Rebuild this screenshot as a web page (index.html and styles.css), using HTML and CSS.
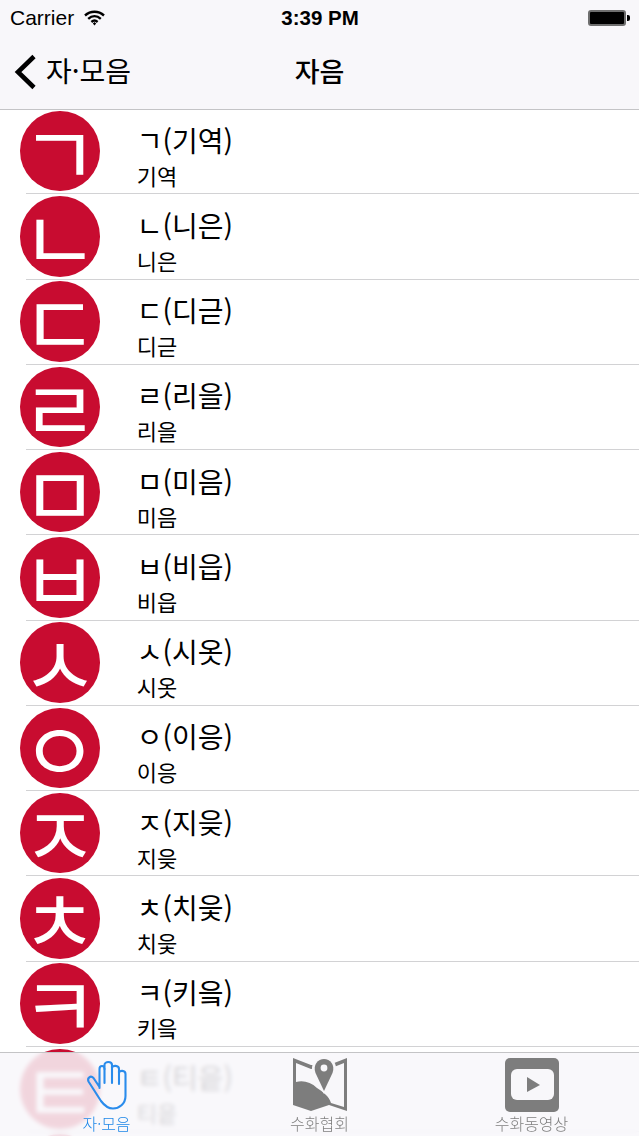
FILE: index.html
```html
<!DOCTYPE html>
<html lang="ko">

<head>
	<meta charset="UTF-8">
	<meta name="viewport" content="width=device-width, initial-scale=1.0">
	<title>자음</title>
	<link rel="stylesheet" href="styles.css">
</head>

<body>
	<div class="screen">
		<header class="top-bar">
			<div class="status-bar">
				<div class="status-left">
					<span>Carrier</span>
					<svg class="wifi" viewBox="0 0 21 16" width="21" height="16">
						<path d="M1 5.5C6.5 .5 14.5 .5 20 5.5" />
						<path d="M4.2 8.8C8 5.4 13 5.4 16.8 8.8" />
						<path d="M7.4 12C9.2 10.4 11.8 10.4 13.6 12" />
						<path class="wifi-dot" d="M8.8 13.4L10.5 11.9L12.2 13.4L10.5 15.4Z" />
					</svg>
				</div>
				<div class="status-time">3:39 PM</div>
				<div class="status-right">
					<div class="battery"></div>
					<div class="battery-nub"></div>
				</div>
			</div>
			<nav class="nav-bar">
				<div class="nav-back">
					<svg class="chevron" viewBox="0 0 23 36" width="23" height="36">
						<path d="M20 2.5L4 18L20 33.5" />
					</svg>
					<span>자·모음</span>
				</div>
				<div class="nav-title">자음</div>
				<div class="nav-side"></div>
			</nav>
		</header>

		<ul class="letter-list">
			<li class="letter-row">
				<div class="letter-badge">ㄱ</div>
				<div class="letter-text">
					<div class="letter-title">ㄱ(기역)</div>
					<div class="letter-sub">기역</div>
				</div>
			</li>
			<li class="letter-row">
				<div class="letter-badge">ㄴ</div>
				<div class="letter-text">
					<div class="letter-title">ㄴ(니은)</div>
					<div class="letter-sub">니은</div>
				</div>
			</li>
			<li class="letter-row">
				<div class="letter-badge">ㄷ</div>
				<div class="letter-text">
					<div class="letter-title">ㄷ(디귿)</div>
					<div class="letter-sub">디귿</div>
				</div>
			</li>
			<li class="letter-row">
				<div class="letter-badge">ㄹ</div>
				<div class="letter-text">
					<div class="letter-title">ㄹ(리을)</div>
					<div class="letter-sub">리을</div>
				</div>
			</li>
			<li class="letter-row">
				<div class="letter-badge">ㅁ</div>
				<div class="letter-text">
					<div class="letter-title">ㅁ(미음)</div>
					<div class="letter-sub">미음</div>
				</div>
			</li>
			<li class="letter-row">
				<div class="letter-badge">ㅂ</div>
				<div class="letter-text">
					<div class="letter-title">ㅂ(비읍)</div>
					<div class="letter-sub">비읍</div>
				</div>
			</li>
			<li class="letter-row">
				<div class="letter-badge">ㅅ</div>
				<div class="letter-text">
					<div class="letter-title">ㅅ(시옷)</div>
					<div class="letter-sub">시옷</div>
				</div>
			</li>
			<li class="letter-row">
				<div class="letter-badge">ㅇ</div>
				<div class="letter-text">
					<div class="letter-title">ㅇ(이응)</div>
					<div class="letter-sub">이응</div>
				</div>
			</li>
			<li class="letter-row">
				<div class="letter-badge">ㅈ</div>
				<div class="letter-text">
					<div class="letter-title">ㅈ(지읒)</div>
					<div class="letter-sub">지읒</div>
				</div>
			</li>
			<li class="letter-row">
				<div class="letter-badge">ㅊ</div>
				<div class="letter-text">
					<div class="letter-title">ㅊ(치읓)</div>
					<div class="letter-sub">치읓</div>
				</div>
			</li>
			<li class="letter-row">
				<div class="letter-badge">ㅋ</div>
				<div class="letter-text">
					<div class="letter-title">ㅋ(키읔)</div>
					<div class="letter-sub">키읔</div>
				</div>
			</li>
			<li class="letter-row">
				<div class="letter-badge">ㅌ</div>
				<div class="letter-text">
					<div class="letter-title">ㅌ(티읕)</div>
					<div class="letter-sub">티읕</div>
				</div>
			</li>
			<li class="letter-row">
				<div class="letter-badge"></div>
			</li>
		</ul>

		<footer class="tab-bar">
			<div class="tab tab--active">
				<svg class="tab-icon" viewBox="0 0 44 50" width="44" height="50">
					<path class="hand" d="M14.5 28V9C14.5 5 19.5 5 19.5 9V5C19.5 1 27 1 27 5V8C27 5 34 5 34 9V13C34 10 40.5 10 40.5 14V36C40.5 44 34 48.5 28 48.5C22 48.5 19 45 16 41L3.5 21.5C2 18 5.5 15 8.5 18L14.5 27" />
					<path class="hand" d="M19.5 9V23M27 6V23M34 11V24" />
				</svg>
				<span>자·모음</span>
			</div>
			<div class="tab">
				<svg class="tab-icon" viewBox="0 0 54 54" width="54" height="54">
					<path class="icon-dark" d="M0 0L18 7H36L54 0V53L36 47L18 53L0 47Z" />
					<path class="icon-light" d="M3 5L18 11H36L51 5V49L38 45C36 38 30 34 24 30C18 24 10 22 3 24Z" />
					<path class="icon-light" d="M31 36L20 16C16 6 24 -2 31 -2C38 -2 46 6 42 16Z" />
					<path class="icon-dark" d="M31 33L22.5 15C19.5 7 25 1 31 1C37 1 42.5 7 39.5 15Z" />
					<circle class="icon-light" cx="31" cy="10" r="3.4" />
				</svg>
				<span>수화협회</span>
			</div>
			<div class="tab tab--last">
				<svg class="tab-icon" viewBox="0 0 54 54" width="54" height="54">
					<rect class="icon-dark" width="54" height="54" rx="5" />
					<rect class="icon-light" x="6" y="11" width="43" height="31" rx="6" />
					<path class="icon-dark" d="M22 19L35 27L22 34Z" />
				</svg>
				<span>수화동영상</span>
			</div>
		</footer>
	</div>
</body>

</html>
```

FILE: styles.css
```css
body {
	margin: 0;
	padding: 0;
	font-family: 'Noto Sans CJK KR', 'Noto Sans', sans-serif;
	color: #000;
	background: #fff;
}

.screen {
	position: relative;
	width: 639px;
	height: 1136px;
	overflow: hidden;
}

/* top bars */
.top-bar {
	height: 109px;
	background-color: #f8f7fa;
	border-bottom: 1px solid #c4c4c6;
}

.status-bar {
	display: grid;
	grid-template-columns: 1fr auto 1fr;
	align-items: center;
	height: 35px;
	padding: 0 9px 0 10px;
	font-family: 'Liberation Sans', sans-serif;
	font-size: 21px;
}

.status-left {
	display: flex;
	align-items: center;
	gap: 10px;
}

.wifi {
	fill: none;
	stroke: #000;
	stroke-width: 2.4;
}

.wifi-dot {
	fill: #000;
	stroke: none;
}

.status-time {
	font-size: 20.5px;
	font-weight: 700;
}

.status-right {
	display: flex;
	justify-content: flex-end;
	align-items: center;
}

.battery {
	width: 34px;
	height: 12px;
	background-color: #000;
	border: 2px solid #6e6e6e;
	border-radius: 3px;
}

.battery-nub {
	width: 3px;
	height: 6px;
	margin-left: 1px;
	background-color: #000;
	border-radius: 0 2px 2px 0;
}

.nav-bar {
	display: grid;
	grid-template-columns: 1fr auto 1fr;
	align-items: center;
	height: 70px;
	padding-left: 14px;
}

.nav-back {
	display: flex;
	align-items: center;
	gap: 9px;
	font-size: 28px;
	font-weight: 400;
	line-height: 1;
}

.chevron {
	fill: none;
	stroke: #000;
	stroke-width: 4.6;
	margin-top: 4px;
}

.nav-title {
	font-size: 27px;
	font-weight: 500;
	margin-left: -14px;
}

/* list */
.letter-list {
	list-style: none;
	margin: 0;
	padding: 0;
}

.letter-row {
	display: flex;
	align-items: center;
	height: 85.25px;
	padding-left: 19.75px;
	position: relative;
	box-sizing: border-box;
}

.letter-row::after {
	content: "";
	position: absolute;
	left: 26px;
	right: 0;
	bottom: 1px;
	border-bottom: 1px solid #d2d2d4;
}

.letter-badge {
	flex: none;
	width: 80px;
	height: 80.5px;
	margin-bottom: 3px;
	border-radius: 50%;
	background-color: #c80c30;
	color: #fff;
	font-size: 84px;
	line-height: 78px;
	text-align: center;
}

.letter-text {
	margin-left: 37px;
	margin-top: 10px;
}

.letter-title {
	font-size: 28px;
	font-weight: 400;
	line-height: 35px;
}

.letter-sub {
	font-size: 22px;
	font-weight: 400;
	line-height: 35px;
}

/* tab bar lies over the end of the list */
.tab-bar {
	position: absolute;
	left: 0;
	right: 0;
	bottom: 0;
	height: 83px;
	display: grid;
	grid-template-columns: repeat(3, 1fr);
	background-color: rgba(248, 247, 250, 0.86);
	border-top: 1px solid #c4c4c6;
	backdrop-filter: blur(2px);
}

.tab {
	display: flex;
	flex-direction: column;
	align-items: center;
	justify-content: space-between;
	padding: 5px 0 4px;
	font-size: 16px;
	font-weight: 300;
	line-height: 18px;
	color: #808080;
}

.tab--active {
	color: #2088e8;
	padding-top: 7px;
}

.tab--last {
	padding-right: 2px;
}

.hand {
	fill: none;
	stroke: #2a8cec;
	stroke-width: 2.1;
	stroke-linecap: round;
	stroke-linejoin: round;
}

.icon-dark {
	fill: #7d7d7d;
}

.icon-light {
	fill: #f8f7fa;
}
```
